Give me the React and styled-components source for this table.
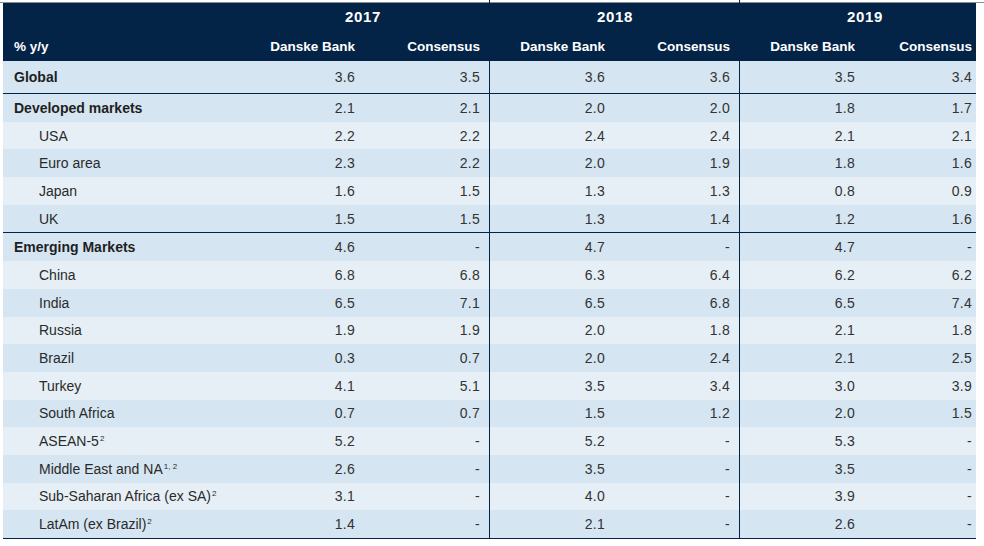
import styled, { createGlobalStyle } from "styled-components";

const GlobalStyle = createGlobalStyle`
  html, body {
    margin: 0;
    padding: 0;
    background: #ffffff;
  }
  body {
    font-family: "Liberation Sans", Arial, sans-serif;
  }
`;

const NAVY = "#032447";
const DARK = "#d5e5f1";
const LIGHT = "#e6eff6";

const years = ["2017", "2018", "2019"];

const groups = [
  [
    { label: "Global", main: true, v: ["3.6", "3.5", "3.6", "3.6", "3.5", "3.4"] },
  ],
  [
    { label: "Developed markets", main: true, v: ["2.1", "2.1", "2.0", "2.0", "1.8", "1.7"] },
    { label: "USA", v: ["2.2", "2.2", "2.4", "2.4", "2.1", "2.1"] },
    { label: "Euro area", v: ["2.3", "2.2", "2.0", "1.9", "1.8", "1.6"] },
    { label: "Japan", v: ["1.6", "1.5", "1.3", "1.3", "0.8", "0.9"] },
    { label: "UK", v: ["1.5", "1.5", "1.3", "1.4", "1.2", "1.6"] },
  ],
  [
    { label: "Emerging Markets", main: true, v: ["4.6", "-", "4.7", "-", "4.7", "-"] },
    { label: "China", v: ["6.8", "6.8", "6.3", "6.4", "6.2", "6.2"] },
    { label: "India", v: ["6.5", "7.1", "6.5", "6.8", "6.5", "7.4"] },
    { label: "Russia", v: ["1.9", "1.9", "2.0", "1.8", "2.1", "1.8"] },
    { label: "Brazil", v: ["0.3", "0.7", "2.0", "2.4", "2.1", "2.5"] },
    { label: "Turkey", v: ["4.1", "5.1", "3.5", "3.4", "3.0", "3.9"] },
    { label: "South Africa", v: ["0.7", "0.7", "1.5", "1.2", "2.0", "1.5"] },
    { label: "ASEAN-5", sup: "2", v: ["5.2", "-", "5.2", "-", "5.3", "-"] },
    { label: "Middle East and NA", sup: "1, 2", v: ["2.6", "-", "3.5", "-", "3.5", "-"] },
    { label: "Sub-Saharan Africa (ex SA)", sup: "2", v: ["3.1", "-", "4.0", "-", "3.9", "-"] },
    { label: "LatAm (ex Brazil)", sup: "2", v: ["1.4", "-", "2.1", "-", "2.6", "-"] },
  ],
];

export default function App() {
  return (
    <>
      <GlobalStyle />
      <Page>
        <Table>
          <TopRule />
          <Head>
            <YearRow>
              <LabelCell />
              {years.map((y, i) => (
                <YearCell key={y} $sep={i > 0} $shift={i === 0 ? -4 : i === 2 ? 14 : 0}>
                  {y}
                </YearCell>
              ))}
            </YearRow>
            <ColRow>
              <HeadLabel>% y/y</HeadLabel>
              {years.map((y, i) => (
                <Pair key={y} $sep={i > 0} $last={i === 2}>
                  <HeadCell>Danske Bank</HeadCell>
                  <HeadCell>Consensus</HeadCell>
                </Pair>
              ))}
            </ColRow>
          </Head>
          {groups.map((rows, gi) => (
            <Group key={gi}>
              {rows.map((r, ri) => (
                <Row key={r.label} $shade={ri % 2 === 0} $tall={gi === 0}>
                  <Label $main={r.main}>
                    {r.label}
                    {r.sup && <Sup>{r.sup}</Sup>}
                  </Label>
                  {[0, 1, 2].map((k) => (
                    <Pair key={k} $sep={k > 0} $last={k === 2}>
                      <Num>{r.v[k * 2]}</Num>
                      <Num>{r.v[k * 2 + 1]}</Num>
                    </Pair>
                  ))}
                </Row>
              ))}
            </Group>
          ))}
        </Table>
      </Page>
    </>
  );
}

const Page = styled.div`
  padding: 0 0 0 3px;
`;

const Table = styled.div`
  width: 973px;
  display: flex;
  flex-direction: column;
`;

const TopRule = styled.div`
  height: 3px;
  border-bottom: 1px solid #8a8f96;
  margin-left: -3px;
  width: 984px;
  box-sizing: border-box;
`;

const Head = styled.div`
  background: ${NAVY};
  color: #ffffff;
  font-weight: 700;
  font-size: 13.5px;
`;

const YearRow = styled.div`
  display: grid;
  grid-template-columns: 237px 250px 250px 236px;
  height: 28px;
`;

const LabelCell = styled.div``;

const YearCell = styled.div`
  position: relative;
  text-align: center;
  font-size: 15px;
  line-height: 28px;
  letter-spacing: 0.6px;
  padding-left: ${(p) => (p.$shift > 0 ? `${p.$shift}px` : "0")};
  padding-right: ${(p) => (p.$shift < 0 ? `${-p.$shift}px` : "0")};

  &::before {
    content: "";
    display: ${(p) => (p.$sep ? "block" : "none")};
    position: absolute;
    left: -1px;
    top: -3px;
    width: 1px;
    height: 3px;
    background: ${NAVY};
  }
`;

const ColRow = styled.div`
  display: grid;
  grid-template-columns: 237px 250px 250px 236px;
  height: 30px;
  align-items: center;
`;

const HeadLabel = styled.div`
  padding-left: 11px;
`;

const Pair = styled.div`
  display: grid;
  grid-template-columns: 125px 1fr;
  height: 100%;
  align-items: center;
  border-left: ${(p) => (p.$sep ? `1px solid ${NAVY}` : "none")};
  margin-left: ${(p) => (p.$sep ? "-1px" : "0")};
  & > * {
    padding-right: 10px;
  }
  & > *:last-child {
    padding-right: ${(p) => (p.$last ? "4px" : "10px")};
  }
`;

const HeadCell = styled.div`
  text-align: right;
  white-space: nowrap;
`;

const Group = styled.div`
  border-bottom: 1px solid ${NAVY};
`;

const Row = styled.div`
  display: grid;
  grid-template-columns: 237px 250px 250px 236px;
  height: ${(p) => (p.$tall ? "32px" : "27.7px")};
  align-items: center;
  background: ${(p) => (p.$shade ? DARK : LIGHT)};
  color: #222;
  font-size: 14px;
`;

const Label = styled.div`
  padding-left: ${(p) => (p.$main ? "11px" : "36px")};
  font-weight: ${(p) => (p.$main ? 700 : 400)};
  color: ${(p) => (p.$main ? "#1f1f1f" : "#2a2a2a")};
  white-space: nowrap;
`;

const Sup = styled.sup`
  font-size: 8px;
  margin-left: 1px;
  vertical-align: 5px;
  line-height: 0;
`;

const Num = styled.div`
  text-align: right;
  color: #333;
  letter-spacing: 0.3px;
`;
